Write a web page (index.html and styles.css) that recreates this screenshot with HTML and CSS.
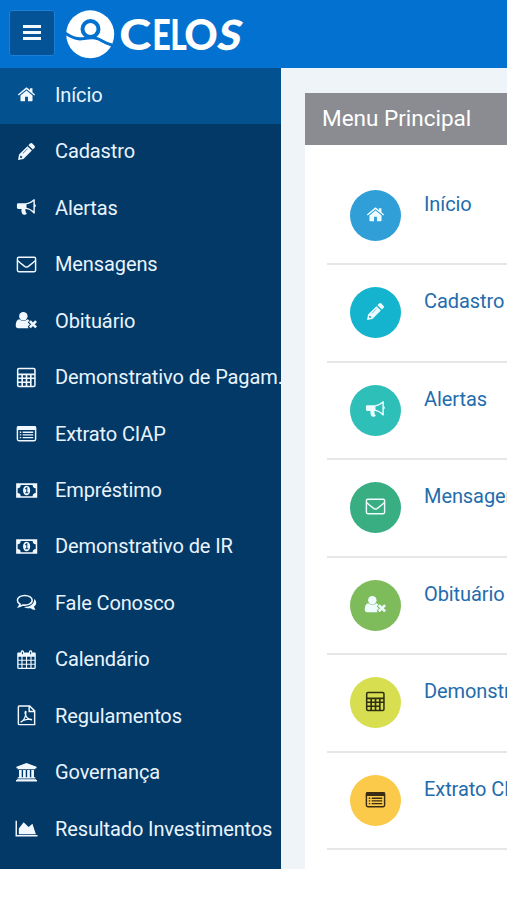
FILE: index.html
```html
<!DOCTYPE html>
<html lang="pt-BR">
<head>
<meta charset="utf-8">
<title>CELOS</title>
<link rel="stylesheet" href="styles.css">
</head>
<body>
<svg class="sprite" aria-hidden="true">
  <symbol id="home" viewBox="0 0 24 24"><path fill="currentColor" d="M12 7.8 18.3 13v5.200a.8.8 0 0 1-.8.8h-4v-4.600h-3V19h-4a.8.8 0 0 1-.8-.8V13z"/><path fill="currentColor" d="m3 12 8-6.900c.6-.5 1.400-.5 2 0l2.600 2.200V5.400h2.600v4.200L21 12l-.9 1L12 6.400 3.900 13z"/></symbol>
  <symbol id="pencil" viewBox="0 0 24 24"><path fill="currentColor" fill-rule="evenodd" d="m3.200 20.800 1-5.600L13 6.400l4.600 4.600-8.800 8.800zM5.600 16.500l-.4 1.400.9.9 1.400-.4v-1.100H6.700v-.8zM14 5.400l1.700-1.700c.7-.7 1.700-.7 2.400 0l2.200 2.200c.7.7.7 1.700 0 2.400L18.600 10zM13 8.800l-5 5 .4.400 5-5z"/></symbol>
  <symbol id="horn" viewBox="0 0 24 24"><path fill="currentColor" fill-rule="evenodd" d="M3.500 7.500H11c3.300 0 6-1.700 8.500-4h1.200v5.200c1.400.4 1.400 2.700 0 3.100v6.400h-1.200C17 15.500 14.500 13.700 11.500 13.500c-1.200.6-1 1.600-.2 2.300-.5.800.1 1.700 1.100 2.400-.8 1.800-3.700 1.700-4.800.7-.6-2-1.300-3.200-.7-5.400H3.500c-1 0-1.500-.7-1.500-1.500V9c0-.9.600-1.500 1.500-1.500zM12 8.700V12.200c2.700.3 5 1.700 7.200 3.500V5.500C17 7.300 14.700 8.400 12 8.700z"/></symbol>
  <symbol id="mail" viewBox="0 0 24 24"><g fill="none" stroke="currentColor" stroke-width="1.500"><rect x="2.500" y="4.500" width="19" height="15" rx="1.500"/><path d="M3 8c2.500 2.500 5 4.200 7.500 6.200q1.500 1 3 0C16 12.200 18.500 10.500 21 8"/></g></symbol>
  <symbol id="userx" viewBox="0 0 24 24"><circle cx="8.700" cy="7.500" r="4.400" fill="currentColor"/><path fill="currentColor" d="M4.500 10.800c2.500 2.200 6 2.200 8.500 0 .9.200 1.500.7 2 1.400l-1.700 1.700 2.200 2.200-2.200 2.200.9 1.700H3.200C1.800 20 .8 19 .8 17.500c0-2.600.8-6.500 3.700-6.700z"/><path d="m15.500 12.700 6.500 6.500m0-6.500-6.500 6.500" stroke="currentColor" stroke-width="2.700"/></symbol>
  <symbol id="calc" viewBox="0 0 24 24"><rect x="2.800" y="2.500" width="18" height="19" rx="1.300" fill="none" stroke="currentColor" stroke-width="1.600"/><path d="M3 8.700h18M3 12.800h18M3 17h13M7.500 8.700V21M12 8.700V21M16.500 8.700V21" stroke="currentColor" stroke-width="1.700"/></symbol>
  <symbol id="list" viewBox="0 0 24 24"><rect x="2.500" y="4.800" width="19" height="14.700" rx="1.500" fill="none" stroke="currentColor" stroke-width="1.500"/><path d="M3 4.100h18l1 1v3.300H2V5.100z" fill="currentColor"/><path d="M5 10.700h1.500M8 10.700h11M5 13.500h1.500M8 13.500h11M5 16.300h1.500M8 16.300h11" stroke="currentColor" stroke-width="1.400"/></symbol>
  <symbol id="money" viewBox="0 0 24 24"><path fill="currentColor" fill-rule="evenodd" d="M1.200 4.500h22v15h-22zM6 6.200c0 2-1 3.200-3.200 3.400v5c2.200.2 3.200 1.400 3.200 3.300h12.400c0-1.900 1-3.100 3.200-3.300v-5c-2.200-.2-3.200-1.400-3.200-3.400z"/><ellipse cx="12.100" cy="12" rx="3.700" ry="5" fill="currentColor"/><path d="m10.700 10.200 1.600-1v5.200m-1.600 0h3.200" class="cut"/></symbol>
  <symbol id="chat" viewBox="0 0 24 24"><path fill="none" stroke="currentColor" stroke-width="1.600" d="M10.200 4.600C5.700 4.600 2.500 6.900 2.500 9.700c0 1.700 1 3.100 2.800 4.100-.2 1-.6 1.700-1.400 2.600 1.700-.2 3-.9 4-1.800 5.500.7 10-1.400 10-4.900 0-2.800-3.200-5.100-7.700-5.100z"/><path fill="currentColor" d="M20 8.300c3 2.200 2.900 6.400-.3 8 .2 1.200.8 2.200 1.800 3.300-2 .1-3.700-.5-5-1.700-3 .4-5.500-.2-7.300-1.300 6.600.1 11.100-3.100 10.800-8.300z"/></symbol>
  <symbol id="cal" viewBox="0 0 24 24"><path fill="currentColor" fill-rule="evenodd" d="M3.500 4.800H6V4c0-2.300 3.400-2.300 3.400 0v.8h5.200V4c0-2.300 3.400-2.300 3.400 0v.8h2.500c.7 0 1.200.6 1.200 1.200v14.700c0 .7-.5 1.200-1.200 1.200h-17c-.7 0-1.200-.5-1.200-1.200V6c0-.6.500-1.200 1.200-1.200zM3.700 9.200v3h3v-3zm4.200 0v3h3.500v-3zm4.700 0v3h3.500v-3zm4.700 0v3h3v-3zM3.700 13.300v3.200h3v-3.200zm4.200 0v3.200h3.500v-3.200zm4.700 0v3.200h3.500v-3.200zm4.700 0v3.200h3v-3.200zM3.700 17.600v2.900h3v-2.900zm4.200 0v2.900h3.500v-2.900zm4.700 0v2.900h3.500v-2.900zm4.700 0v2.900h3v-2.900zM7.200 3.800v2.700h1V3.800zm8.600 0v2.700h1V3.800z"/></symbol>
  <symbol id="pdf" viewBox="0 0 24 24"><g fill="none" stroke="currentColor" stroke-width="1.500"><path d="M4.500 2h10.800L20.500 7.200v14.300h-16c-.6 0-1-.4-1-1V3c0-.6.400-1 1-1zM14.800 2v5.800h5.700"/><path stroke-width="1.300" d="M6.500 18.700c2.800-1.500 5-6.200 5-10.500-.6-1.100-1.400.2-.8 2.200.8 3.300 3 5.800 6.500 6.200.9-1.200-4.300-1.300-8.700.6-2.200 1-2.600 1.800-2 1.500z"/></g></symbol>
  <symbol id="bank" viewBox="0 0 24 24"><path fill="currentColor" d="M12 2 22.500 6v1.500h-1.300v1H2.800v-1H1.500V6zM4.200 9.300H7V17h1.400V9.300h2.800V17h1.500V9.300h2.800V17H17V9.300h2.800V17h1.400v1.300H2.800V17h1.400zM2 19h20v.8h1v1.700H1v-1.700h1z"/></symbol>
  <symbol id="chart" viewBox="0 0 24 24"><path d="M1.300 4v15.500H23.500" fill="none" stroke="currentColor" stroke-width="1.500"/><path fill="currentColor" d="M4 18v-6l5-6.500 5.200 5 4-3.500L21.800 18z"/></symbol>
</svg>
<header class="topbar">
  <button class="toggle" aria-label="Menu"><span></span><span></span><span></span></button>
  <svg class="logo" viewBox="0 0 180 50" role="img" aria-label="CELOS">
    <circle cx="24.200" cy="24.300" r="24"/>
    <path class="wave" d="M-1 23C3 25.500 7 28.800 14 28.800c6 0 10-2 16-.5 6 1.500 9 6 16 6.700"/>
    <circle class="ring" cx="24.500" cy="19" r="8"/>
    <path class="hill" d="M15 30.700c5-.3 9-1.800 14-.9 5 1 8.500 4.300 14 6l-3 5H20z"/>
    <g class="word"><text x="53.200" y="39.500" textLength="32" lengthAdjust="spacingAndGlyphs">C</text><text x="86.300" y="39.500" textLength="18.500" lengthAdjust="spacingAndGlyphs">E</text><text x="104.300" y="39.500" textLength="16.500" lengthAdjust="spacingAndGlyphs">L</text><text x="118.200" y="39.500" textLength="33.500" lengthAdjust="spacingAndGlyphs">O</text><text transform="translate(149.500 39.500) skewX(-12)" textLength="23.500" lengthAdjust="spacingAndGlyphs">S</text></g>
  </svg>
</header>
<div class="layout">
  <nav class="sidebar">
    <a class="active"><svg><use href="#home"/></svg>Início</a>
    <a><svg><use href="#pencil"/></svg>Cadastro</a>
    <a><svg><use href="#horn"/></svg>Alertas</a>
    <a><svg><use href="#mail"/></svg>Mensagens</a>
    <a><svg><use href="#userx"/></svg>Obituário</a>
    <a><svg><use href="#calc"/></svg>Demonstrativo de Pagam.</a>
    <a><svg><use href="#list"/></svg>Extrato CIAP</a>
    <a><svg><use href="#money"/></svg>Empréstimo</a>
    <a><svg><use href="#money"/></svg>Demonstrativo de IR</a>
    <a><svg><use href="#chat"/></svg>Fale Conosco</a>
    <a><svg><use href="#cal"/></svg>Calendário</a>
    <a><svg><use href="#pdf"/></svg>Regulamentos</a>
    <a><svg><use href="#bank"/></svg>Governança</a>
    <a><svg><use href="#chart"/></svg>Resultado Investimentos</a>
  </nav>
  <main class="content">
    <section class="panel">
      <h1>Menu Principal</h1>
      <ul>
        <li><span class="dot blue"><svg><use href="#home"/></svg></span><a>Início</a></li>
        <li><span class="dot cyan"><svg><use href="#pencil"/></svg></span><a>Cadastro</a></li>
        <li><span class="dot teal"><svg><use href="#horn"/></svg></span><a>Alertas</a></li>
        <li><span class="dot green"><svg><use href="#mail"/></svg></span><a>Mensagens</a></li>
        <li><span class="dot leaf"><svg><use href="#userx"/></svg></span><a>Obituário</a></li>
        <li><span class="dot lime"><svg><use href="#calc"/></svg></span><a>Demonstrativo de Pagam.</a></li>
        <li><span class="dot amber"><svg><use href="#list"/></svg></span><a>Extrato CIAP</a></li>
      </ul>
    </section>
  </main>
</div>
</body>
</html>
```
FILE: styles.css
```css
* { box-sizing: border-box; }
html, body { height: 900px; overflow: hidden; }
body { margin: 0; background: #fff; font-family: Roboto, sans-serif; font-size: 20px; }
.sprite { display: block; width: 0; height: 0; }
.cut { fill: none; stroke: #033966; stroke-width: 1.1; }

.topbar { display: flex; align-items: flex-start; height: 67.5px; padding: 10px 0 0 9px; background: #0371cf; }
.toggle { display: flex; flex-direction: column; align-items: center; gap: 3px; width: 46px; height: 46px; margin: 0; padding: 14px 0 0; border: 1px solid #1b80d6; border-radius: 3px; background: #045397; }
.toggle span { width: 18px; height: 3px; background: #f3faff; }
.logo { width: 180px; height: 50px; margin-left: 11px; fill: #fff; overflow: visible; }
.wave { fill: none; stroke: #0371cf; stroke-width: 3.2; }
.ring { stroke: #0371cf; stroke-width: 4; }
.hill { fill: #fff; }
.word { font-family: Lato, sans-serif; font-size: 41.5px; font-weight: 900; }

.layout { display: flex; height: 801px; overflow: hidden; }
.sidebar { flex: none; width: 281px; overflow: hidden; background: #033966; }
.sidebar a { display: flex; align-items: center; gap: 18px; height: 56.47px; padding: 0 0 2px 15px; color: #e9f4ff; white-space: nowrap; letter-spacing: -0.11px; }
.sidebar .active { background: #045190; }
.sidebar svg { flex: none; width: 23px; height: 23px; margin-right: -1px; color: #f1f8ff; }

.content { flex: 1; min-width: 0; padding: 25px 0 0 24px; background: #eff4f9; }
.panel { height: 776px; background: #fff; }
.panel h1 { height: 52px; margin: 0; padding-left: 17px; background: #8b8c91; color: #fff; font-size: 22.5px; font-weight: 400; line-height: 50px; }
.panel ul { margin: 0; padding: 23px 0 0 22px; list-style: none; }
.panel li { display: flex; align-items: flex-start; height: 97.5px; padding: 22px 0 0 23px; border-bottom: 2px solid #e6e7e8; white-space: nowrap; overflow: hidden; }
.panel li a { margin: 2px 0 0 23px; color: #236cad; line-height: 24px; letter-spacing: -0.08px; }
.dot { display: flex; flex: none; align-items: center; justify-content: center; width: 51px; height: 51px; padding-bottom: 2px; border-radius: 50%; color: #effcff; }
.dot svg { width: 23px; height: 23px; }
.blue { background: #309fd8; }
.cyan { background: #14b4cf; }
.teal { background: #2dbfb8; }
.green { background: #39ae82; }
.leaf { background: #7dbb5b; }
.lime { background: #d7df50; color: #302f13; }
.amber { background: #fbca4a; color: #3a2b12; }
```
